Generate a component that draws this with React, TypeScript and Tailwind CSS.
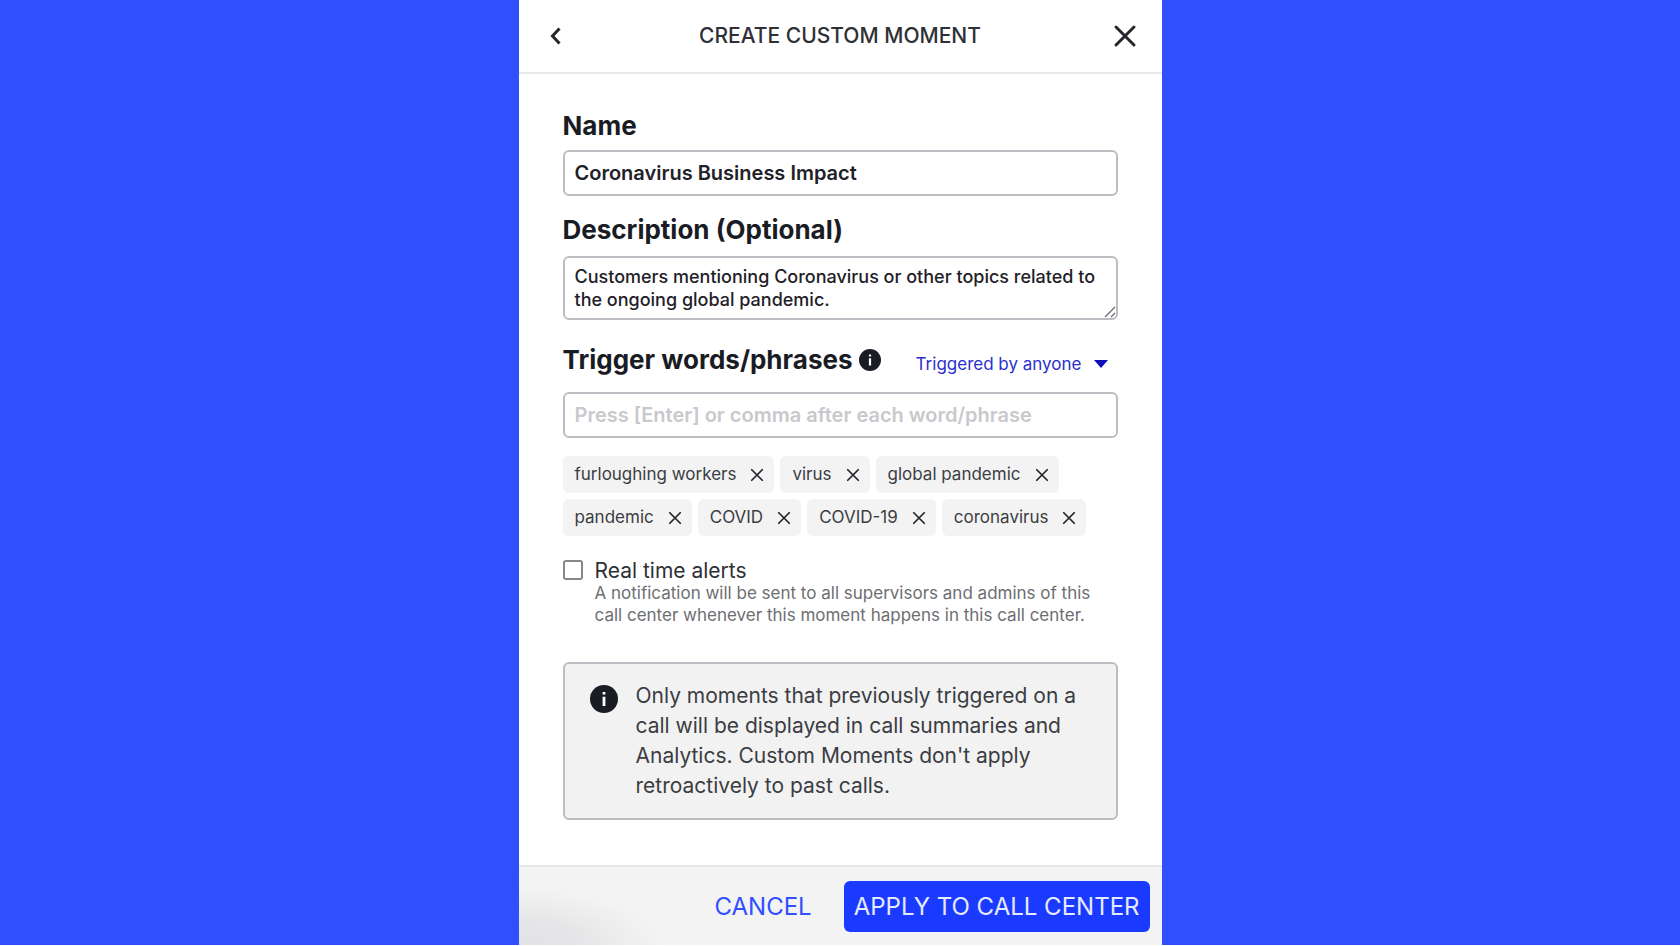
import React, { useState } from 'react';

const initialTriggers = [
  'furloughing workers',
  'virus',
  'global pandemic',
  'pandemic',
  'COVID',
  'COVID-19',
  'coronavirus',
];

export default function App() {
  const [name, setName] = useState('Coronavirus Business Impact');
  const [description, setDescription] = useState(
    'Customers mentioning Coronavirus or other topics related to the ongoing global pandemic.'
  );
  const [triggers, setTriggers] = useState<string[]>(initialTriggers);
  const [draft, setDraft] = useState('');
  const [alerts, setAlerts] = useState(false);

  const addTrigger = (e: React.KeyboardEvent<HTMLInputElement>) => {
    if (e.key !== 'Enter' && e.key !== ',') return;
    e.preventDefault();
    const value = draft.trim();
    if (value && !triggers.includes(value)) setTriggers([...triggers, value]);
    setDraft('');
  };

  return (
    <div className="flex min-h-screen flex-col bg-white pb-px font-['Inter',sans-serif]">
      <div className="flex flex-1 justify-center bg-[#304ffe]">
        <main className="flex w-full max-w-[643px] flex-col bg-white">
          <header className="flex items-center justify-between border-b-2 border-[#e8e8e8] px-6 py-4">
            <button type="button" aria-label="Back" className="flex size-10 items-center pl-1.5">
              <svg viewBox="0 0 12 18" className="h-[18px] w-3" fill="none" stroke="#24262c" strokeWidth="3">
                <path d="M10.5 1.5 3.5 9l7 7.5" />
              </svg>
            </button>
            <h1 className="text-[21px] leading-8 font-medium text-[#2e3036]">CREATE CUSTOM MOMENT</h1>
            <button type="button" aria-label="Close" className="flex size-10 items-center justify-end">
              <CloseIcon className="size-6" width={3} />
            </button>
          </header>

          <form className="flex-1 px-11 pt-9 pb-10" onSubmit={(e) => e.preventDefault()}>
            <label htmlFor="name" className="block text-[26px] leading-8 font-bold text-[#1a1c24]">Name</label>
            <input
              id="name"
              value={name}
              onChange={(e) => setName(e.target.value)}
              className="mt-2 block h-[46px] w-full rounded-md border-2 border-[#bcbcc2] px-2.5 text-xl font-semibold text-[#1f2128]"
            />

            <label htmlFor="description" className="mt-[18px] block text-[26px] leading-8 font-bold text-[#1a1c24]">
              Description (Optional)
            </label>
            <div className="relative mt-2.5">
              <textarea
                id="description"
                rows={2}
                value={description}
                onChange={(e) => setDescription(e.target.value)}
                className="block w-full resize-none overflow-hidden rounded-md border-2 border-[#bcbcc2] px-2.5 py-[7px] text-[18px] leading-[23px] font-medium text-[#1f2128]"
              />
              <svg viewBox="0 0 12 12" className="pointer-events-none absolute right-0.5 bottom-0.5 size-3" stroke="#66676c" strokeWidth="1.2">
                <path d="M1 11 11 1M7 11l4-4" />
              </svg>
            </div>

            <div className="mt-6 flex items-center justify-between">
              <div className="flex items-center gap-1.5">
                <label htmlFor="triggers" className="text-[26px] leading-8 font-bold text-[#1a1c24]">Trigger words/phrases</label>
                <InfoIcon className="size-[22px]" />
              </div>
              <div className="relative pt-2">
                <select
                  aria-label="Triggered by"
                  className="field-sizing-content appearance-none pr-9 text-[17px] leading-6 text-[#2a2fd0]"
                >
                  <option>Triggered by anyone</option>
                </select>
                <svg viewBox="0 0 14 8" className="pointer-events-none absolute right-2.5 bottom-2 h-2 w-3.5" fill="#0d0db8">
                  <path d="M0 0h14L7 8z" />
                </svg>
              </div>
            </div>
            <input
              id="triggers"
              value={draft}
              onChange={(e) => setDraft(e.target.value)}
              onKeyDown={addTrigger}
              placeholder="Press [Enter] or comma after each word/phrase"
              className="mt-4 block h-[46px] w-full rounded-md border-2 border-[#bcbcc2] px-2.5 text-xl font-semibold text-[#1f2128] placeholder:text-[#c8c9cc]"
            />

            <ul className="mt-[18px] flex flex-wrap gap-1.5">
              {triggers.map((t) => (
                <li key={t} className="flex h-[37px] items-center gap-3.5 rounded-md bg-[#f3f3f4] pr-2.5 pl-3 text-[17px] text-[#3b3d42]">
                  {t}
                  <button type="button" aria-label={`Remove ${t}`} onClick={() => setTriggers(triggers.filter((x) => x !== t))}>
                    <CloseIcon className="size-3.5" width={3} />
                  </button>
                </li>
              ))}
            </ul>

            <div className="mt-6 flex gap-3">
              <input
                id="alerts"
                type="checkbox"
                checked={alerts}
                onChange={(e) => setAlerts(e.target.checked)}
                className="size-5 shrink-0 appearance-none rounded-[3px] border-2 border-[#86878b] bg-white checked:bg-[#1a3aff]"
              />
              <div>
                <label htmlFor="alerts" className="block text-[21px] leading-[22px] text-[#2e3036]">Real time alerts</label>
                <p className="text-[17px] leading-[22px] text-[#6d6e72]">
                  A notification will be sent to all supervisors and admins of this call center whenever this moment happens in this call center.
                </p>
              </div>
            </div>

            <div className="mt-9 flex gap-[18px] rounded-md border-2 border-[#bcbcc2] bg-[#f2f2f2] px-[25px] py-[17px]">
              <InfoIcon className="mt-1 size-7 shrink-0" />
              <p className="text-[21px] leading-[30px] text-[#3b3d42]">
                Only moments that previously triggered on a call will be displayed in call summaries and Analytics. Custom Moments don't apply retroactively to past calls.
              </p>
            </div>
          </form>

          <footer className="flex items-center justify-end gap-5 border-t-2 border-[#e6e6e6] bg-[#f3f3f3] bg-[radial-gradient(ellipse_140px_56px_at_0%_100%,#e2e2e4,#e6e6e8_45%,#f3f3f3)] px-3 pt-3.5 pb-[13px]">
            <button type="button" className="px-3 text-2xl text-[#304ffe]">CANCEL</button>
            <button type="button" className="h-[51px] rounded-md bg-[#1a3aff] px-2.5 text-2xl text-[#e6eaff]">APPLY TO CALL CENTER</button>
          </footer>
        </main>
      </div>
    </div>
  );
}

function InfoIcon({ className }: { className: string }) {
  return (
    <svg viewBox="0 0 24 24" className={className} role="img" aria-label="Info">
      <circle cx="12" cy="12" r="12" fill="#1a1c24" />
      <path d="M10.8 6h2.4v2.2h-2.4zM10.8 10h2.4v8h-2.4z" fill="#fff" />
    </svg>
  );
}

function CloseIcon({ className, width }: { className: string, width: number }) {
  return (
    <svg viewBox="0 0 24 24" className={className} fill="none" stroke="#24262c" strokeWidth={width} strokeLinecap="round">
      <path d="M3 3l18 18M21 3 3 21" />
    </svg>
  );
}
